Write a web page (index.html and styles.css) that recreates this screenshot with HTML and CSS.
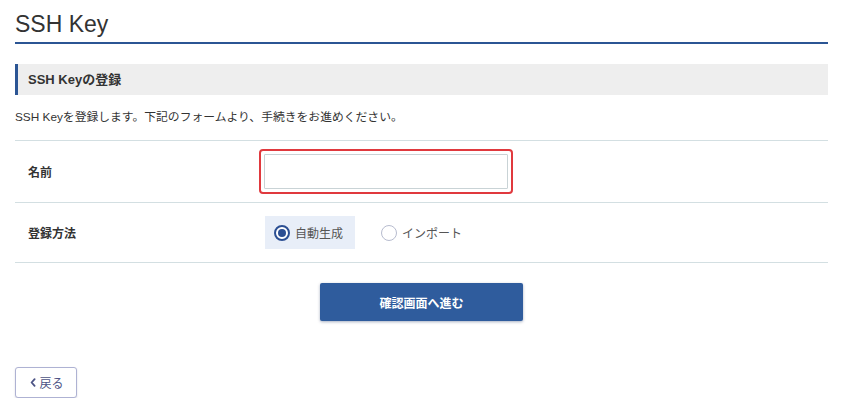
FILE: index.html
```html
<!DOCTYPE html>
<html lang="ja">
<head>
<meta charset="utf-8">
<title>SSH Key</title>
<link rel="stylesheet" href="styles.css">
</head>
<body>
<main class="page">
  <h1 class="page-title">SSH Key</h1>
  <h2 class="section-title">SSH Keyの登録</h2>
  <p class="lead">SSH Keyを登録します。下記のフォームより、手続きをお進めください。</p>
  <div class="form">
    <div class="row">
      <div class="label">名前</div>
      <div class="field">
        <div class="input-wrap"><input class="text-input" type="text"></div>
      </div>
    </div>
    <div class="row row-radio">
      <div class="label">登録方法</div>
      <div class="field radios">
        <label class="radio is-checked"><span class="dot"></span>自動生成</label>
        <label class="radio"><span class="dot"></span>インポート</label>
      </div>
    </div>
  </div>
  <div class="actions">
    <button class="btn-primary" type="button">確認画面へ進む</button>
  </div>
  <div class="back-area">
    <button class="btn-back" type="button"><svg class="chev" width="6" height="9" viewBox="0 0 6 9"><path d="M4.6 1.2 L1.6 4.5 L4.6 7.8" fill="none" stroke="currentColor" stroke-width="1.8" stroke-linecap="round" stroke-linejoin="round"/></svg>戻る</button>
  </div>
</main>
</body>
</html>
```
FILE: styles.css
```css
html, body {
  margin: 0;
  padding: 0;
  background: #fff;
}
body {
  font-family: "Liberation Sans", "Noto Sans CJK JP", sans-serif;
  color: #333;
}
.page {
  padding: 0 16px 0 15px;
}
.page-title {
  margin: 0;
  padding: 9px 0 3px;
  font-size: 23px;
  line-height: 30px;
  font-weight: normal;
  color: #333;
  border-bottom: 2px solid #2b5594;
}
.section-title {
  margin: 20px 0 0;
  height: 31px;
  line-height: 31px;
  padding-left: 10px;
  background: #eeeeee;
  border-left: 3px solid #2b5594;
  font-size: 13px;
  font-weight: bold;
  color: #333;
}
.lead {
  margin: 14px 0 0;
  font-size: 11.8px;
  line-height: 16px;
  color: #333;
}
.form {
  margin-top: 15px;
  border-top: 1px solid #d3dfe2;
}
.row {
  display: flex;
  align-items: center;
  padding: 8px 0;
  border-bottom: 1px solid #d3dfe2;
}
.row-radio {
  padding: 13px 0;
}
.label {
  width: 231px;
  padding-left: 13px;
  font-size: 12px;
  font-weight: bold;
  color: #333;
}
.field {
  flex: 1;
}
.input-wrap {
  width: 254px;
  padding: 3px;
  border: 2px solid #e0393e;
  border-radius: 4px;
  box-sizing: border-box;
}
.text-input {
  display: block;
  width: 244px;
  height: 35px;
  box-sizing: border-box;
  border: 1px solid #c9d3d6;
  border-radius: 1px;
  margin: 0;
  padding: 0 8px;
  font: inherit;
  outline: none;
}
.radios {
  display: flex;
  gap: 17px;
  padding-left: 6px;
}
.radio {
  display: flex;
  align-items: center;
  gap: 5px;
  height: 33px;
  padding: 0 12px 0 9px;
  font-size: 12px;
  color: #555;
}
.radio.is-checked {
  background: #e8eef8;
}
.dot {
  width: 16px;
  height: 16px;
  box-sizing: border-box;
  border: 1.5px solid #b7bccf;
  border-radius: 50%;
  background: #fff;
  position: relative;
}
.is-checked .dot {
  border: 2px solid #2c4f93;
}
.is-checked .dot::after {
  content: "";
  position: absolute;
  left: 2px;
  top: 2px;
  width: 8px;
  height: 8px;
  border-radius: 50%;
  background: #2c4f93;
}
.actions {
  display: flex;
  justify-content: center;
  margin-top: 20px;
}
.btn-primary {
  width: 203px;
  height: 38px;
  border: none;
  border-radius: 2px;
  background: #2f5c9d;
  color: #fff;
  font: bold 12px "Liberation Sans", "Noto Sans CJK JP", sans-serif;
  box-shadow: 0 1px 3px rgba(0, 30, 80, 0.35);
}
.back-area {
  margin-top: 46px;
}
.btn-back {
  display: flex;
  align-items: center;
  justify-content: center;
  gap: 3px;
  width: 62px;
  height: 31px;
  border: 1px solid #aeb2d3;
  border-radius: 3px;
  background: #fff;
  color: #4c5385;
  font: 12px "Liberation Sans", "Noto Sans CJK JP", sans-serif;
  box-shadow: 0 1px 2px rgba(60, 60, 110, 0.2);
  padding: 0 0 0 2px;
}
.chev {
  display: block;
}
```
